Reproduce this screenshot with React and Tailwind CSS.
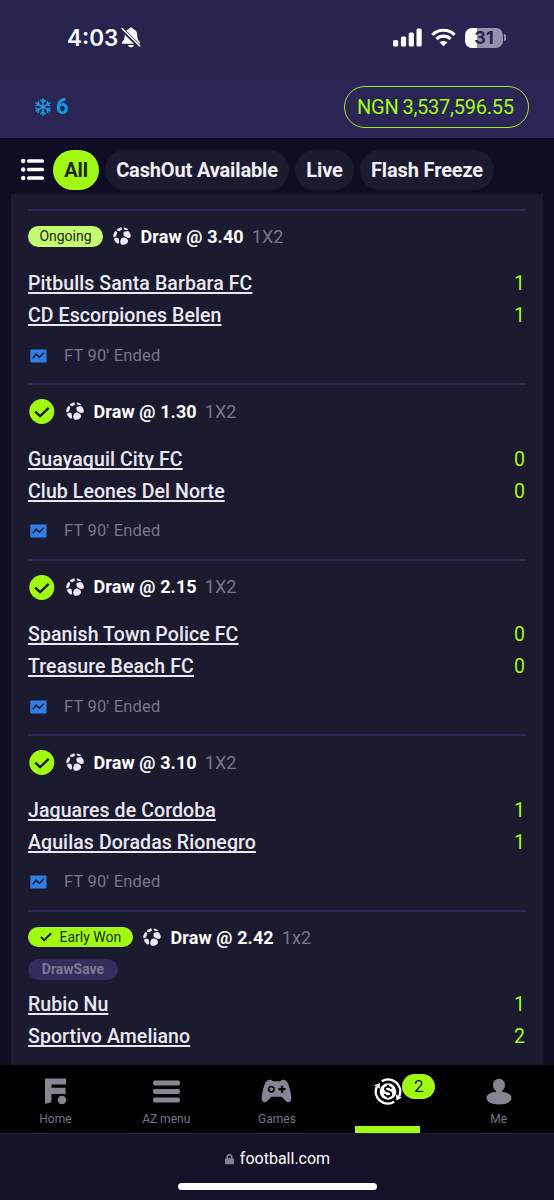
import React from 'react';
import { FaLock } from 'react-icons/fa';

const filters = [
  { label: 'All', className: 'w-[46px] bg-[#a0fa14] text-[#25242b]' },
  { label: 'CashOut Available', className: 'w-[184px] bg-[#1c1a2f] text-[#f0eff7]' },
  { label: 'Live', className: 'w-[59px] bg-[#1c1a2f] text-[#f0eff7]' },
  { label: 'Flash Freeze', className: 'w-[134px] bg-[#1c1a2f] text-[#f0eff7]' },
];

const bets = [
  { status: 'ongoing', pick: 'Draw @ 3.40', market: '1X2', home: 'Pitbulls Santa Barbara FC', away: 'CD Escorpiones Belen', score: [1, 1], time: "FT 90' Ended" },
  { status: 'won', pick: 'Draw @ 1.30', market: '1X2', home: 'Guayaquil City FC', away: 'Club Leones Del Norte', score: [0, 0], time: "FT 90' Ended" },
  { status: 'won', pick: 'Draw @ 2.15', market: '1X2', home: 'Spanish Town Police FC', away: 'Treasure Beach FC', score: [0, 0], time: "FT 90' Ended" },
  { status: 'won', pick: 'Draw @ 3.10', market: '1X2', home: 'Jaguares de Cordoba', away: 'Aguilas Doradas Rionegro', score: [1, 1], time: "FT 90' Ended" },
  { status: 'early', pick: 'Draw @ 2.42', market: '1x2', home: 'Rubio Nu', away: 'Sportivo Ameliano', score: [1, 2], tag: 'DrawSave' },
];

const headings = {
  ongoing: 'h-[50.5px]',
  won: 'h-[52px]',
  early: 'h-[47.5px] pt-[3.5px]',
};

const BellOff = () => (
  <svg width="20" height="21" viewBox="0 0 20 21" fill="#fff">
    <path d="M10 0.6c1 0 1.7.6 1.9 1.4 2.7.8 4.4 3.1 4.4 6 0 4.4 1 5.400 2.500 6.900.9.9.4 1.800-.7 1.800H1.900c-1.100 0-1.600-.9-.7-1.800C2.700 13.400 3.700 12.400 3.700 8c0-2.900 1.700-5.200 4.400-6C8.300 1.200 9 .6 10 .6z" />
    <path d="M7 17.900h6c-.4 1.400-1.600 2.300-3 2.300s-2.600-.9-3-2.300z" />
    <path d="M0.500 1.700L18.800 19.800" stroke="#28244f" strokeWidth="4" />
    <path d="M1.100 1.500L18.800 18.900" stroke="#fff" strokeWidth="1.500" strokeLinecap="round" />
  </svg>
);

const Signal = () => (
  <svg width="29" height="19" viewBox="0 0 29 19" fill="#fff">
    <rect x="0" y="12" width="5.200" height="6.500" rx="1.500" />
    <rect x="7.900" y="8.500" width="5.200" height="10" rx="1.500" />
    <rect x="15.700" y="4.500" width="5.200" height="14" rx="1.500" />
    <rect x="23.500" y="0.500" width="5.200" height="18" rx="1.500" />
  </svg>
);

const Wifi = () => (
  <svg width="25" height="19" viewBox="0 0 25 19" fill="none" stroke="#fff" strokeWidth="3.200">
    <path d="M1.400 6.800C7.500.700 17.500.700 23.600 6.800" />
    <path d="M5.400 11C9.400 7.200 15.600 7.200 19.600 11" />
    <path d="M12.500 18.300L8.600 14.400c2.100-2 5.700-2 7.800 0z" fill="#fff" stroke="none" />
  </svg>
);

const Snowflake = () => (
  <svg width="18" height="18" viewBox="0 0 18 18" fill="none" stroke="#149bdf" strokeWidth="1.500">
    {[0, 60, 120, 180, 240, 300].map((angle) => (
      <path key={angle} d="M9 9V0.300M6.300 1.900L9 4.500L11.700 1.900" transform={`rotate(${angle} 9 9)`} />
    ))}
  </svg>
);

const SoccerBall = () => (
  <svg className="shrink-0" width="18" height="18" viewBox="0 0 18 18" fill="#e9e8f3">
    <path d="M4.200 2L8 0.300L9.300 2.300L6.300 4.200L4 3.600z" />
    <path d="M10.600 0.400C12.700 0.600 14.300 1.300 15.300 2.500L13.300 3.300L10.900 2.300z" />
    <path d="M2.900 3.700L4.300 5.500L3 9.200L0.500 10.500C-0.100 7.600 0.900 5.200 2.900 3.700z" />
    <path d="M11 4.700L14.900 4C17 5.300 17.900 7.300 17.800 9.500C17 10.900 15.900 11.300 14.700 11L11 8.900C10.200 7.200 10.300 5.700 11 4.700z" />
    <path d="M2.700 10.600L5.600 11.300L6.200 15.500L4.900 16.700C2.700 15.500 1.300 13.700 0.900 11.700z" />
    <path d="M8.500 11.200C10 10 12.100 10.300 13.500 11.500C15.200 12.700 15.600 14.300 14.500 15.700C12.800 17.400 10.700 18 8.700 17.800C7.500 16.700 7 15.400 7.200 13.900z" />
  </svg>
);

const WonCheck = () => (
  <svg className="shrink-0" width="28" height="26" viewBox="0 0 28 26">
    <circle cx="13.800" cy="13.500" r="12.500" fill="#a0fa14" />
    <path d="M7.300 13.700L12.100 18.200L20.700 9.800" fill="none" stroke="#1c1a2f" strokeWidth="2.400" />
  </svg>
);

const StatsIcon = () => (
  <svg width="17" height="14" viewBox="0 0 17 14">
    <rect x="0.300" y="0.500" width="16.200" height="13" rx="1" fill="#2f80e4" />
    <path d="M2.700 9.200L6.100 5.200L9.400 8.200L13.800 3.700" fill="none" stroke="#1c1a2f" strokeWidth="1.500" />
  </svg>
);

const StatusBadge = ({ status }) => {
  if (status === 'won') return <WonCheck />;
  if (status === 'early') {
    return (
      <span className="flex h-5 w-[105px] items-center rounded-full bg-[#a0fa14] pl-3 text-[14px] text-[#1c2a10]">
        <svg className="mr-[7.500px]" width="12" height="10" viewBox="0 0 12 10" fill="none" stroke="#17230c" strokeWidth="2">
          <path d="M0.900 4.900L4.200 8.100L11.200 1.200" />
        </svg>
        Early Won
      </span>
    );
  }
  return (
    <span className="flex h-[21px] w-[75px] items-center justify-center rounded-full bg-[#c3fb71] text-[14px] text-[#1c2a10]">
      Ongoing
    </span>
  );
};

const BetRow = ({ bet }) => (
  <div className="border-t-2 border-[#2c2953]">
    <div className={`flex items-center ${headings[bet.status]}`}>
      <StatusBadge status={bet.status} />
      <div className="ml-[9.500px] flex items-center">
        <SoccerBall />
        <span className="ml-[10px] text-[18px] font-bold tracking-[0.1px] text-white">{bet.pick}</span>
        <span className="ml-2 text-[18px] tracking-[0.1px] text-[#77758a]">{bet.market}</span>
      </div>
    </div>
    {bet.tag && (
      <div className="mb-[2.500px] flex h-[21px] w-[90px] items-center justify-center rounded-full bg-[#332e5d] text-[14px] font-bold text-[#7b7896]">
        {bet.tag}
      </div>
    )}
    <div className="pt-[6px]">
      {[bet.home, bet.away].map((team, i) => (
        <div key={team} className="flex h-8 items-center justify-between pt-px">
          <span className="text-[19.500px] font-medium tracking-[0.09px] text-[#eae9f3] underline decoration-[1.500px] underline-offset-[2px] [text-decoration-skip-ink:none]">{team}</span>
          <span className="pr-[1px] text-[19.500px] text-[#a0fa14]">{bet.score[i]}</span>
        </div>
      ))}
    </div>
    {bet.time && (
      <div className="mb-[3.500px] flex h-12 items-center pl-[2px]">
        <StatsIcon />
        <span className="ml-[17px] pt-px text-[16.500px] tracking-[0.18px] text-[#77758a]">{bet.time}</span>
      </div>
    )}
  </div>
);

const HomeIcon = () => (
  <svg width="23" height="27" viewBox="0 0 23 27" fill="#878594">
    <path d="M1 0.500H22V6.500H7.500V9.700H21.500V16H7.500V22.500C7.500 24.500 5.500 25.500 1 25.500z" />
    <circle cx="18" cy="22" r="4.200" />
  </svg>
);

const MenuIcon = () => (
  <svg width="27" height="27" viewBox="0 0 27 27" fill="#878594">
    <rect y="2.500" width="27" height="5" rx="2" />
    <rect y="11" width="27" height="5" rx="2" />
    <rect y="19.500" width="27" height="5" rx="2" />
  </svg>
);

const GamesIcon = () => (
  <svg width="31" height="27" viewBox="0 0 31 27">
    <path
      d="M7.500 2C9.200 1.500 10.500 1.900 11.500 3.200H19.500C20.500 1.900 21.800 1.500 23.500 2C25.700 2.600 27 4.800 28 8.300C29.100 12 30.500 17.500 30.300 20.500C30 24.500 27 25.300 24.700 23L20.500 18.800H10.500L6.300 23C4 25.300 1 24.500 0.700 20.500C0.500 17.500 1.900 12 3 8.300C4 4.800 5.300 2.600 7.500 2z"
      fill="#878594"
    />
    <circle cx="10.300" cy="11.200" r="2.700" fill="none" stroke="#000" strokeWidth="1.700" />
    <path d="M21 7.700V14.700M17.500 11.200H24.500" stroke="#000" strokeWidth="2.200" />
  </svg>
);

const BetsIcon = () => (
  <svg width="28" height="27" viewBox="0 0 28 27" fill="none">
    <circle cx="14" cy="13.500" r="8.300" fill="#fff" />
    <path d="M7.800 3.300A12 12 0 0 1 25.300 18M20.200 23.700A12 12 0 0 1 2.700 9" stroke="#fff" strokeWidth="2.400" />
    <path d="M0.200 7.200L5.700 5L6 10.800zM27.800 19.500L22.500 22.500L22 16.500z" fill="#fff" />
    <path d="M17.200 10.800C16.900 9.500 15.700 8.900 14 8.900C12.200 8.900 11 9.800 11 11.100C11 14.300 17.300 12.500 17.300 15.900C17.300 17.300 15.900 18.200 14 18.200C12.200 18.200 10.900 17.400 10.600 15.900M14 7V9M14 18V20" stroke="#000" strokeWidth="1.800" />
  </svg>
);

const MeIcon = () => (
  <svg width="26" height="27" viewBox="0 0 26 27" fill="#878594">
    <ellipse cx="13" cy="7.200" rx="6" ry="6.500" />
    <path d="M10 10.500H16V13.700C22 14.300 25.500 16.700 25.500 20C25.500 23.700 20 26.500 13 26.500S0.500 23.700 0.500 20C0.500 16.700 4 14.300 10 13.700z" />
  </svg>
);

const navItems = [
  { label: 'Home', Icon: HomeIcon },
  { label: 'AZ menu', Icon: MenuIcon },
  { label: 'Games', Icon: GamesIcon },
  { label: '', Icon: BetsIcon, count: 2, active: true },
  { label: 'Me', Icon: MeIcon },
];

const App = () => {
  return (
    <div className="flex h-[1200px] w-[554px] flex-col overflow-hidden bg-[#0f0c24] font-['Roboto',sans-serif] whitespace-nowrap">
      {/* Status bar */}
      <div className="flex h-[79px] shrink-0 items-center justify-between bg-[#28244f] pr-[48px] pl-[67px] pb-[4px]">
        <div className="flex items-center">
          <span className="w-[54px] pt-px font-['Inter',sans-serif] text-[22.500px] font-semibold text-white">4:03</span>
          <BellOff />
        </div>
        <div className="flex items-center">
          <Signal />
          <span className="ml-[9px]"><Wifi /></span>
          <span className="ml-[9px] flex h-5 w-[38px] items-center justify-center rounded-[7px] bg-linear-to-r from-white from-31% to-[#9391ab] to-31% font-['Inter',sans-serif] text-[18px] font-bold text-[#28244f]">31</span>
          <span className="ml-px h-[7px] w-[2px] rounded-r-full bg-[#9391ab]" />
        </div>
      </div>

      {/* Header */}
      <div className="flex h-[59px] shrink-0 items-center justify-between bg-[#2b2555] pr-[25px] pb-[4px] pl-[34px]">
        <div className="flex items-center gap-[4px] text-[22px] font-bold text-[#149bdf]">
          <Snowflake />
          <span>6</span>
        </div>
        <div className="flex h-[42px] w-[185px] items-center rounded-full border-[1.500px] border-[#a0e62c] pl-3 text-[20px] tracking-[-0.25px] text-[#a0fa14]">
          <span>NGN</span>
          <span className="ml-1">3,537,596.55</span>
        </div>
      </div>

      {/* Filters */}
      <div className="flex h-[56px] shrink-0 items-start gap-[6px] pt-[12px] pl-[21px]">
        <svg className="mt-2 mr-[3px]" width="23" height="23" viewBox="0 0 23 23" fill="#fff">
          {[3, 11.500, 20].map((y) => (
            <g key={y}>
              <circle cx="2.200" cy={y} r="2.200" />
              <rect x="6" y={y - 1.800} width="17" height="3.600" rx="1.500" />
            </g>
          ))}
        </svg>
        {filters.map((filter) => (
          <button key={filter.label} className={`h-10 rounded-full text-[20px] font-bold tracking-[-0.15px] ${filter.className}`}>
            {filter.label}
          </button>
        ))}
      </div>

      {/* Bets */}
      <div className="mx-[11px] h-[871px] shrink-0 overflow-hidden bg-[#1c1a2f] px-[17px] pt-[15px]">
        {bets.map((bet) => (
          <BetRow key={bet.home} bet={bet} />
        ))}
      </div>

      {/* Bottom navigation */}
      <nav className="grid h-[68px] shrink-0 grid-cols-5 bg-black">
        {navItems.map(({ label, Icon, count, active }) => (
          <div key={label} className="relative flex flex-col items-center pt-[13px]">
            <Icon />
            {label && <span className="mt-[6px] text-[12px] leading-4 text-[#77758a]">{label}</span>}
            {count && (
              <span className="absolute top-[9px] left-[70px] flex h-[25px] w-[33px] items-center justify-center rounded-full bg-[#a0fa14] text-[17px] text-[#17230c]">
                {count}
              </span>
            )}
            {active && <span className="absolute bottom-0 h-[7px] w-[65px] bg-[#a0fa14]" />}
          </div>
        ))}
      </nav>

      {/* Browser bar */}
      <div className="flex h-[67px] shrink-0 flex-col items-center border-t border-[#24223a] bg-[#141129] pt-[12px]">
        <div className="flex h-6 items-center gap-[6px] pt-px pl-px text-[16px] text-white">
          <FaLock className="h-[12px] w-[9px] text-[#83818f]" />
          football.com
        </div>
        <div className="mt-[13px] h-[7px] w-[199px] rounded-full bg-white" />
      </div>
    </div>
  );
};

export default App;
